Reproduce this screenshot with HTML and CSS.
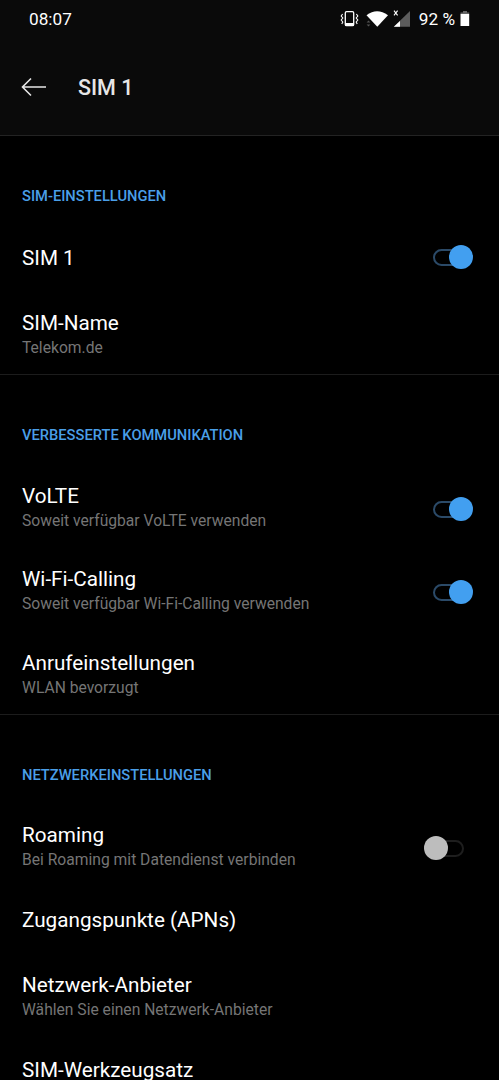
FILE: index.html
```html
<!DOCTYPE html>
<html lang="de">
    <head>
        <meta charset="UTF-8">
        <meta name="viewport" content="width=device-width, initial-scale=1.0">
        <title>SIM 1</title>
        <link rel="stylesheet" href="styles.css">
    </head>
    <body>
        <header>
            <div class="status-bar">
                <span class="clock">08:07</span>
                <svg class="status-icons" width="82" height="20" viewBox="0 0 82 20">
                    <!-- vibrate -->
                    <rect x="5.3" y="2.7" width="8.4" height="14" rx="1.3" fill="none" stroke="#fff" stroke-width="1.3"/>
                    <path d="M5 14h9v2.5H5z" fill="#fff"/>
                    <path d="M2.6 5l-1.4 2 1.6 2-1.6 2 1.6 2-1 2M16.4 5l1.4 2-1.6 2 1.6 2-1.6 2 1 2" fill="none" stroke="#fff" stroke-width="1.1"/>
                    <!-- wifi -->
                    <path d="M26.5 6.2Q37 -1.6 48 6.2L37.3 17.7z" fill="#fff"/>
                    <path d="M26.6 13.5l1.9-2 1.9 2zM26.6 15.5l1.9 2 1.9-2z" fill="#555"/>
                    <!-- mobile signal -->
                    <path d="M70 2v15.800H53.800z" fill="#5c5c5c"/>
                    <path d="M60 12v5.800h-6.200z" fill="#fff"/>
                    <path d="M54 1.6l3.6 4.8M57.6 1.6l-3.6 4.8" stroke="#fff" stroke-width="1.1"/>
                </svg>
                <span class="battery-level">92 %</span>
                <svg class="battery" width="10" height="16" viewBox="0 0 10 16">
                    <path d="M3 0h4v1.6h2.2v1.5H.5V1.6H3z" fill="#666"/>
                    <path d="M.5 3h8.700v12H.5z" fill="#fff"/>
                </svg>
            </div>
            <div class="toolbar">
                <svg class="back" width="26" height="20" viewBox="0 0 26 20">
                    <path d="M25 10H1.5M10 1.5L1.5 10l8.5 8.5" fill="none" stroke="#e6e6e6" stroke-width="1.6"/>
                </svg>
                <h1>SIM 1</h1>
            </div>
        </header>
        <main>
            <section>
                <h2>SIM-EINSTELLUNGEN</h2>
                <div class="row single">
                    <div class="title">SIM 1</div>
                    <div class="switch on"></div>
                </div>
                <div class="row">
                    <div>
                        <div class="title">SIM-Name</div>
                        <div class="summary">Telekom.de</div>
                    </div>
                </div>
            </section>
            <section>
                <h2>VERBESSERTE KOMMUNIKATION</h2>
                <div class="row">
                    <div>
                        <div class="title">VoLTE</div>
                        <div class="summary">Soweit verfügbar VoLTE verwenden</div>
                    </div>
                    <div class="switch on"></div>
                </div>
                <div class="row">
                    <div>
                        <div class="title">Wi-Fi-Calling</div>
                        <div class="summary">Soweit verfügbar Wi-Fi-Calling verwenden</div>
                    </div>
                    <div class="switch on"></div>
                </div>
                <div class="row">
                    <div>
                        <div class="title">Anrufeinstellungen</div>
                        <div class="summary">WLAN bevorzugt</div>
                    </div>
                </div>
            </section>
            <section>
                <h2>NETZWERKEINSTELLUNGEN</h2>
                <div class="row">
                    <div>
                        <div class="title">Roaming</div>
                        <div class="summary">Bei Roaming mit Datendienst verbinden</div>
                    </div>
                    <div class="switch"></div>
                </div>
                <div class="row single">
                    <div class="title">Zugangspunkte (APNs)</div>
                </div>
                <div class="row">
                    <div>
                        <div class="title">Netzwerk-Anbieter</div>
                        <div class="summary">Wählen Sie einen Netzwerk-Anbieter</div>
                    </div>
                </div>
                <div class="row single">
                    <div class="title">SIM-Werkzeugsatz</div>
                </div>
            </section>
        </main>
    </body>
</html>
```

FILE: styles.css
```css
*, *::before, *::after {
    box-sizing: border-box;
}
body {
    margin: 0;
    height: 100vh;
    overflow: hidden;
    background-color: #000;
    color: #fff;
    font-family: Roboto, sans-serif;
}
header {
    height: 136px;
    background-color: #0a0a0a;
    border-bottom: 1px solid #232323;
}
.status-bar {
    display: flex;
    align-items: center;
    height: 38px;
    padding: 0 29px;
    font-size: 17.2px;
}
.status-icons {
    margin-left: auto;
}
.battery-level {
    margin: 0 5px 0 -3px;
}
.toolbar {
    display: flex;
    align-items: center;
    height: 97px;
    padding-left: 21px;
}
h1 {
    margin: 2px 0 0 31px;
    font-size: 21.5px;
    font-weight: 500;
    color: #e6e6e6;
}
section + section {
    border-top: 1px solid #1c1c1c;
}
h2 {
    height: 89px;
    margin: 0;
    padding: 51px 22px 0;
    font-size: 14.7px;
    line-height: 18px;
    font-weight: 500;
    color: #4a9fe8;
}
section + section h2 {
    height: 88.6px;
}
.row {
    display: flex;
    justify-content: space-between;
    align-items: center;
    height: 83.6px;
    padding: 2px 26px 0 22px;
}
/* last row above a divider */
.row:last-child {
    height: 83px;
}
.row.single {
    height: 66.3px;
    padding-top: 0;
}
.title {
    font-size: 20.7px;
    line-height: 24px;
}
.summary {
    padding-top: 3px;
    font-size: 15.65px;
    line-height: 19px;
    color: #757575;
}
.switch {
    position: relative;
    top: 2px;
    width: 40px;
    height: 24px;
    margin-right: 9px;
}
.switch.on {
    margin-right: 0;
}
.single .switch {
    top: -1px;
}
.switch::before {
    content: "";
    position: absolute;
    top: 4px;
    right: 0;
    width: 32px;
    height: 17px;
    border: 2px solid #1e1e1e;
    border-radius: 9px;
}
.switch::after {
    content: "";
    position: absolute;
    top: 0;
    left: 0;
    width: 24px;
    height: 24px;
    border-radius: 50%;
    background-color: #bdbdbd;
}
.switch.on::before {
    right: auto;
    left: 0;
    border-color: #2b4a68;
}
.switch.on::after {
    left: 16px;
    background-color: #429ff0;
}
```
